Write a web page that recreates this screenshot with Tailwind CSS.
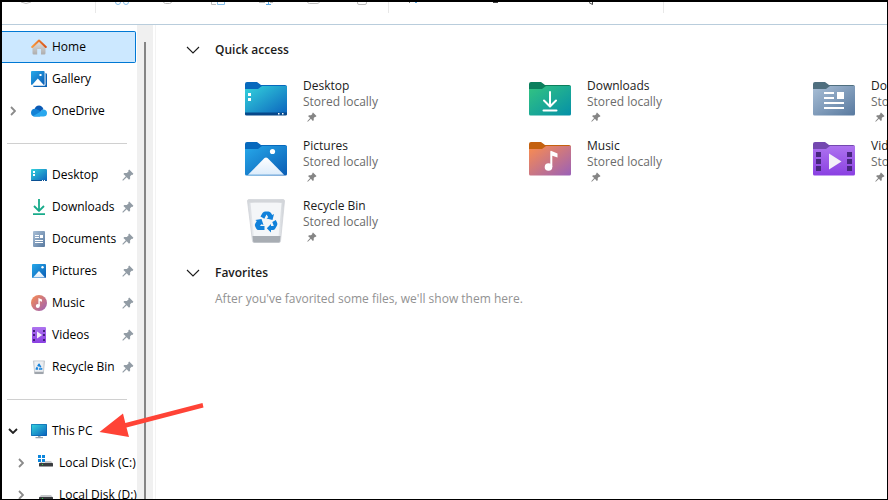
<!DOCTYPE html>
<html lang="en">
<head>
  <meta charset="UTF-8" />
  <meta name="viewport" content="width=device-width, initial-scale=1.0" />
  <title>Home - File Explorer</title>
  <script src="https://cdn.jsdelivr.net/npm/@tailwindcss/browser@4"></script>
</head>
<body class="bg-white font-['Open_Sans','Noto_Sans',sans-serif] text-xs text-black">

  <!-- Icon sprite -->
  <svg class="absolute w-0 h-0" aria-hidden="true">
    <defs>
      <linearGradient id="g-teal" x1="0" y1="0" x2="1" y2="1"><stop offset="0" stop-color="#34d3dc" /><stop offset="1" stop-color="#0b62bd" /></linearGradient>
      <linearGradient id="g-blue" x1="0" y1="0" x2="1" y2="1"><stop offset="0" stop-color="#27a9ea" /><stop offset="1" stop-color="#0a5cb4" /></linearGradient>
      <linearGradient id="g-green" x1="0" y1="0" x2="1" y2="1"><stop offset="0" stop-color="#33c481" /><stop offset="1" stop-color="#0590a8" /></linearGradient>
      <linearGradient id="g-music" x1="0" y1="0" x2="1" y2="1"><stop offset="0" stop-color="#fb8d4e" /><stop offset="1" stop-color="#9a60b8" /></linearGradient>
      <linearGradient id="g-doc" x1="0" y1="0" x2="1" y2="1"><stop offset="0" stop-color="#a9bfd6" /><stop offset="1" stop-color="#58799f" /></linearGradient>
      <linearGradient id="g-video" x1="0" y1="0" x2="0" y2="1"><stop offset="0" stop-color="#ad73ef" /><stop offset="1" stop-color="#8a40e2" /></linearGradient>
      <linearGradient id="g-white" x1="0" y1="0" x2="0" y2="1"><stop offset="0" stop-color="#ffffff" /><stop offset="1" stop-color="#dcecfb" /></linearGradient>
      <linearGradient id="g-roof" x1="0" y1="0" x2="1" y2="0"><stop offset="0" stop-color="#f99a3e" /><stop offset="1" stop-color="#d9541a" /></linearGradient>
      <linearGradient id="g-wall" x1="0" y1="0" x2="0" y2="1"><stop offset="0" stop-color="#e2e2e2" /><stop offset="1" stop-color="#adadad" /></linearGradient>
      <linearGradient id="g-bin" x1="0" y1="0" x2="1" y2="0"><stop offset="0" stop-color="#d3d7dc" /><stop offset=".2" stop-color="#eef0f3" /><stop offset=".8" stop-color="#eceef1" /><stop offset="1" stop-color="#cdd1d6" /></linearGradient>
    </defs>

    <symbol id="pin" viewBox="0 0 12 12"><path fill="currentColor" d="M7.2.6 11.4 4.8 10.4 5.9 9.7 5.7 8.1 7.3 8.1 9.8 7 10.7 4.7 8.2 1 11.7.3 11 3.800 7.300 1.400 5 2.300 4 4.800 4 6.500 2.400 6.300 1.600Z" /></symbol>
    <symbol id="chev-right" viewBox="0 0 6 10"><path fill="none" stroke="currentColor" stroke-width="1.8" d="M1 1 5 5 1 9" /></symbol>
    <symbol id="chev-down" viewBox="0 0 14 8"><path fill="none" stroke="currentColor" stroke-width="1.1" d="M1 1 7 7 13 1" /></symbol>

    <!-- 16px icons -->
    <symbol id="home" viewBox="0 0 16 16">
      <path fill="url(#g-wall)" d="M8 2 14.5 8V14.2Q14.5 15.5 13.3 15.5H10V10H6.2V15.5H2.7Q1.5 15.5 1.5 14.2V8Z" />
      <path fill="none" stroke="url(#g-roof)" stroke-width="2" stroke-linejoin="round" stroke-linecap="round" d="M1.2 8 8 1.6 14.8 8" />
    </symbol>
    <symbol id="gallery" viewBox="0 0 16 16">
      <path fill="#0c63b6" d="M14.5 2Q16 2.2 16 3.5V16H3.5Q2 16 2 14.8H13.2Q14.5 14.8 14.5 13.5Z" />
      <rect width="13.6" height="14" rx="1" fill="url(#g-blue)" />
      <path fill="#fff" d="M1 14 6.8 7.5 12.8 14Z" /><rect x="8.5" y="3" width="2" height="2" fill="#fff" />
    </symbol>
    <symbol id="onedrive" viewBox="0 0 16 12">
      <path fill="#0a5ab5" d="M3.500 4.500Q4.500 .500 8 .500 11 .500 12.400 4L8 8Z" />
      <path fill="#1382d6" d="M4 11.500Q0 11.500 0 7.800 .200 4 4 3.800 6 3.800 11 7.500L9 11.500Z" />
      <path fill="#2aa8ee" d="M2 11 10 6.400Q11 4 13 4.600 16 5.300 16 8.300 15.800 11.500 12.600 11.500H4Q2.800 11.500 2 11Z" />
    </symbol>
    <symbol id="desktop" viewBox="0 0 16 12">
      <rect width="16" height="12" rx="1" fill="url(#g-teal)" />
      <path fill="#0a4f92" d="M0 11H16V11.2Q16 12 15 12H1Q0 12 0 11Z" />
      <path fill="#fff" d="M2 2H4V4H2ZM2 5H4V7H2ZM11 11H12V12H11ZM13 11H14V12H13Z" />
    </symbol>
    <symbol id="download" viewBox="0 0 16 16"><path fill="none" stroke="#18ab8b" stroke-width="1.8" d="M8 0V11.5M3 7 8 12 13 7M2 15.2H14" /></symbol>
    <symbol id="document" viewBox="0 0 16 16">
      <rect x="2" width="12" height="16" rx="1" fill="url(#g-doc)" />
      <path fill="#fff" d="M4 4H8V5H4ZM4 6H8V7H4ZM9 4H12V7H9ZM4 9H12V10H4ZM4 11H12V12H4Z" />
    </symbol>
    <symbol id="picture" viewBox="0 0 16 16">
      <rect x="1" y="1" width="14" height="14" rx="1" fill="url(#g-blue)" />
      <path fill="url(#g-white)" d="M2 14.6 8 8 14 14.6Z" /><circle cx="11.5" cy="4.3" r="1.2" fill="#fff" />
    </symbol>
    <symbol id="music" viewBox="0 0 16 16">
      <circle cx="8" cy="8" r="8" fill="url(#g-music)" />
      <circle cx="6.8" cy="11" r="2" fill="#fff" /><path fill="#fff" d="M7.4 3 11 4.5V6.8L8.8 6V11H7.4Z" />
    </symbol>
    <symbol id="video" viewBox="0 0 16 16">
      <rect x="1" y="0" width="14" height="16" rx="1" fill="url(#g-video)" />
      <path fill="#43207d" d="M2 3H4V5H2ZM2 7H4V9H2ZM2 12H4V14H2ZM12 3H14V5H12ZM12 7H14V9H12ZM12 12H14V14H12Z" />
      <path fill="#f3f0f8" d="M6 4.500 11.200 8 6 11.500Z" />
    </symbol>
    <symbol id="bin" viewBox="0 0 16 16">
      <path fill="url(#g-bin)" stroke="#b9bec5" stroke-width=".7" d="M2.400 1.900H13.600L12.300 14.600H3.700Z" />
      <path fill="#9fa5ac" d="M3.500 12.800H12.500L12.300 15H3.700Z" />
      <path fill="none" stroke="#1683dc" stroke-width="1.700" stroke-linejoin="round" stroke-dasharray="3.600 .900" d="M8 5.300 10.600 10H5.400Z" />
    </symbol>
    <symbol id="pc" viewBox="0 0 16 16">
      <rect x="0" y="1" width="16" height="12" rx=".8" fill="#0a5fae" />
      <rect x=".6" y="1.6" width="14.8" height="10.8" fill="url(#g-teal)" />
      <path fill="#9aa4ae" d="M7 13H9.5V14H12V15.2H4.5V14H7Z" />
    </symbol>
    <symbol id="disk-win" viewBox="0 0 16 12">
      <path fill="#0c86dc" d="M1 0H4V3H1ZM5 0H8V3H5ZM1 4H4V7H1ZM5 4H8V7H5Z" />
      <path fill="#c5c7ca" d="M2 8.500 4 7H5V7.500H8V6H14L16 8.500Z" />
      <rect x="2" y="8" width="14" height="3.500" rx=".6" fill="#3b3d40" /><rect x="5" y="9" width="1" height="1" fill="#32d74b" />
    </symbol>
    <symbol id="disk" viewBox="0 0 16 12">
      <path fill="#c5c7ca" d="M2 8.500 4 6H14L16 8.500Z" />
      <rect x="2" y="8" width="14" height="3.500" rx=".6" fill="#3b3d40" /><rect x="5" y="9" width="1" height="1" fill="#32d74b" />
    </symbol>

    <!-- 44px folders -->
    <symbol id="f-desktop" viewBox="0 0 44 36">
      <path fill="#0769bd" d="M1 3Q1 1 3 1H13L17 4H41Q43 4 43 6V12H1Z" />
      <path fill="url(#g-teal)" d="M1 8H14L18 5H43V33Q43 34 42 34H2Q1 34 1 33Z" />
      <path fill="#07488a" d="M1 31.5H43V33Q43 34.5 41.5 34.5H2.5Q1 34.5 1 33Z" />
      <path fill="#fff" d="M4 12H7V15H4ZM4 17H7V20H4ZM34 32H35.5V33.5H34ZM38 32H39.5V33.5H38Z" />
    </symbol>
    <symbol id="f-download" viewBox="0 0 44 36">
      <path fill="#0b7f5d" d="M1 3Q1 1 3 1H13L17 4H41Q43 4 43 6V12H1Z" />
      <path fill="url(#g-green)" d="M1 8H14L18 5H43V33Q43 34.5 41.5 34.5H2.5Q1 34.5 1 33Z" />
      <path fill="none" stroke="#fff" stroke-width="2" stroke-linecap="round" stroke-linejoin="round" d="M22 11V25M16 19.5 22 25.5 28 19.5M15.5 29.5H28.5" />
    </symbol>
    <symbol id="f-document" viewBox="0 0 44 36">
      <path fill="#4f6f7f" d="M1 3Q1 1 3 1H13L17 4H41Q43 4 43 6V12H1Z" />
      <path fill="url(#g-doc)" d="M1 8H14L18 5H43V33Q43 34.5 41.5 34.5H2.5Q1 34.5 1 33Z" />
      <path fill="#fff" d="M12 11H22V13H12ZM12 16H22V18H12ZM25 11H32V18H25ZM12 21H32V23H12ZM12 26H32V28H12Z" />
    </symbol>
    <symbol id="f-picture" viewBox="0 0 44 36">
      <path fill="#0769bd" d="M1 3Q1 1 3 1H13L17 4H41Q43 4 43 6V12H1Z" />
      <path fill="url(#g-blue)" d="M1 8H14L18 5H43V33Q43 34.5 41.5 34.5H2.5Q1 34.5 1 33Z" />
      <path fill="url(#g-white)" d="M4 33.8 20.5 17Q22 15.8 23.5 17L40 33.8Z" /><circle cx="28.5" cy="10.5" r="2.6" fill="#fff" />
    </symbol>
    <symbol id="f-music" viewBox="0 0 44 36">
      <path fill="#c4610f" d="M1 3Q1 1 3 1H13L17 4H41Q43 4 43 6V12H1Z" />
      <path fill="url(#g-music)" d="M1 8H14L18 5H43V33Q43 34.5 41.5 34.5H2.5Q1 34.5 1 33Z" />
      <circle cx="20.5" cy="26" r="3.8" fill="#fff" /><path fill="#fff" d="M22.3 10.5Q22.5 9.5 23.5 10L29.5 12.5V16.5L24.3 14.8V26H22.3Z" />
    </symbol>
    <symbol id="f-video" viewBox="0 0 44 36">
      <path fill="#7448b0" d="M1 3Q1 1 3 1H13L17 4H41Q43 4 43 6V12H1Z" />
      <path fill="url(#g-video)" d="M1 8H14L18 5H43V33Q43 34.5 41.5 34.5H2.5Q1 34.5 1 33Z" />
      <path fill="#482680" d="M4 11H9V16H4ZM4 18H9V23H4ZM4 25H9V30H4ZM35 11H40V16H35ZM35 18H40V23H35ZM35 25H40V30H35Z" />
      <path fill="#f4f1f8" d="M17 12.5 29.5 20.5 17 28.5Z" />
    </symbol>
    <symbol id="f-bin" viewBox="0 0 44 48">
      <path fill="url(#g-bin)" stroke="#d0d3d8" stroke-width=".8" stroke-linejoin="round" d="M3.500 4Q3.500 2.500 5 2.500H39Q40.500 2.500 40.500 4L36.500 44Q36.500 45.500 35 45.500H10Q8.500 45.500 8.500 44Z" />
      <path fill="#f4f6f8" d="M6.500 6H37.500L34.500 39H10Z" />
      <path fill="#d3d6da" d="M4 3H40L39.500 5.500H4.500Z" />
      <path fill="#a8adb3" d="M8.500 39H36.500L36 44Q35.900 45.500 34.500 45.500H10.500Q9.200 45.500 9 44Z" />
      <g fill="#1181da">
        <path d="M16.500 19.500 18.500 16Q19.500 14.500 21 14.500H24.500Q26 14.500 27 16L28.200 18 30 17 28.500 23 22.500 21.500 24.300 20.300 22.500 17.500 20.300 21.700Z" />
        <path d="M28.300 25 31.800 23 33 25.500Q33.800 27 33 28.500L31.300 31.500Q30.300 33 29 33H27V35.500L22.800 31.300 27 27V29H29.800Z" />
        <path d="M17.500 22 19.500 28 17.300 27.200 16 29H20.500V33H14.500Q13 33 12.200 31.500L11.200 29.500Q10.500 28 11.300 26.500L12.800 24 11.300 23Z" />
      </g>
    </symbol>
  </svg>

  <div class="relative flex h-screen flex-col overflow-hidden border-t-2 border-r border-b border-l-2 border-black">

    <!-- Command bar, scrolled almost out of view -->
    <div role="toolbar" aria-label="Commands" class="flex h-[23px] shrink-0 items-start border-b border-[#b9cddc]">
      <button aria-label="New" class="flex w-12 justify-center"><svg class="w-4 h-1" viewBox="0 0 16 4"><path fill="none" stroke="#bcbcbc" d="M3 0Q8 3 13 0" /></svg></button>
      <div class="ml-[45px] h-[11px] w-px bg-[#e8e8e8]"></div>
      <div class="mx-0.5 flex">
        <button aria-label="Cut" class="flex w-12 justify-center"><svg class="w-4 h-1" viewBox="0 0 16 4"><path fill="none" stroke="#86c0eb" d="M1.500 0Q1.500 2.500 4 2.500T6.500 0M9.500 0Q9.500 2.500 12 2.500T14.500 0" /></svg></button>
        <button aria-label="Copy" class="flex w-12 justify-center"><svg class="w-4 h-1" viewBox="0 0 16 4"><path fill="none" stroke="#bcbcbc" d="M1.500 0Q2 1.500 3.500 1.500H7.500Q9 1.500 9.500 0" /></svg></button>
        <button aria-label="Paste" class="flex w-12 justify-center"><svg class="w-4 h-1" viewBox="0 0 16 4"><path fill="none" stroke="#bcbcbc" d="M1.500 0V2.500H6" /><path fill="none" stroke="#86c0eb" d="M7.500 0V2.500H14.500V0" /></svg></button>
        <button aria-label="Rename" class="flex w-12 justify-center"><svg class="w-4 h-1" viewBox="0 0 16 4"><path fill="none" stroke="#bcbcbc" d="M1 .500H7M12 .500H15" /><path fill="none" stroke="#5aa9e6" d="M10.500 0V2.500M8 2.500H13" /></svg></button>
        <button aria-label="Share" class="flex w-12 justify-center"><svg class="w-4 h-1" viewBox="0 0 16 4"><path fill="none" stroke="#bcbcbc" d="M1.500 0Q2 1.500 3.500 1.500H11Q13 1.500 13.500 0" /></svg></button>
        <button aria-label="Delete" class="flex w-12 justify-center"><svg class="w-4 h-1" viewBox="0 0 16 4"><path fill="none" stroke="#bcbcbc" d="M3.500 0V1Q3.500 2.500 5 2.500H11Q12.500 2.500 12.500 1V0" /></svg></button>
      </div>
      <div class="h-[11px] w-px bg-[#e8e8e8]"></div>
      <button aria-label="Sort" class="flex w-12 justify-center"><svg class="w-4 h-1" viewBox="0 0 16 4"><path fill="#777" d="M4 0H5V1H4Z" /><path fill="#5aa9e6" d="M10 0H12V1H10Z" /></svg></button>
      <button aria-label="View" class="flex w-[116px] justify-center"><svg class="w-4 h-1" viewBox="0 0 16 4"><path fill="#444" d="M6 0H11V1H6Z" /></svg></button>
      <button aria-label="Filter" class="flex w-[76px] justify-center"><svg class="w-4 h-1" viewBox="0 0 16 4"><path fill="none" stroke="#444" d="M6 .500 9.500 2.500V0" /></svg></button>
      <div class="ml-[34px] h-[11px] w-px bg-[#e8e8e8]"></div>
    </div>

    <div class="flex min-h-0 flex-1">

      <!-- Navigation pane -->
      <nav class="w-[135px] shrink-0 overflow-hidden pt-1.5 whitespace-nowrap">
        <a href="#" class="mr-px flex h-8 items-center gap-[5px] rounded-r-xs border border-l-0 border-[#0078d4] bg-[#cce8ff] pl-[29px]"><svg class="size-4"><use href="#home" /></svg>Home</a>
        <a href="#" class="flex h-8 items-center gap-[5px] pl-[29px]"><svg class="size-4"><use href="#gallery" /></svg>Gallery</a>
        <a href="#" class="flex h-8 items-center gap-[5px] pl-2"><svg class="mr-2.5 h-2.5 w-1.5 text-[#8a8a8a]"><use href="#chev-right" /></svg><svg class="h-3 w-4"><use href="#onedrive" /></svg>OneDrive</a>

        <div class="flex h-8 items-center pr-2.5 pl-[5px]"><hr class="w-full border-[#d0d0d0]" /></div>

        <a href="#" class="flex h-8 items-center gap-[5px] pl-[29px]"><svg class="h-3 w-4"><use href="#desktop" /></svg>Desktop<svg class="mr-[3px] ml-auto size-3 text-[#929ca5]"><use href="#pin" /></svg></a>
        <a href="#" class="flex h-8 items-center gap-[5px] pl-[29px]"><svg class="size-4"><use href="#download" /></svg>Downloads<svg class="mr-[3px] ml-auto size-3 text-[#929ca5]"><use href="#pin" /></svg></a>
        <a href="#" class="flex h-8 items-center gap-[5px] pl-[29px]"><svg class="size-4"><use href="#document" /></svg>Documents<svg class="mr-[3px] ml-auto size-3 text-[#929ca5]"><use href="#pin" /></svg></a>
        <a href="#" class="flex h-8 items-center gap-[5px] pl-[29px]"><svg class="size-4"><use href="#picture" /></svg>Pictures<svg class="mr-[3px] ml-auto size-3 text-[#929ca5]"><use href="#pin" /></svg></a>
        <a href="#" class="flex h-8 items-center gap-[5px] pl-[29px]"><svg class="size-4"><use href="#music" /></svg>Music<svg class="mr-[3px] ml-auto size-3 text-[#929ca5]"><use href="#pin" /></svg></a>
        <a href="#" class="flex h-8 items-center gap-[5px] pl-[29px]"><svg class="size-4"><use href="#video" /></svg>Videos<svg class="mr-[3px] ml-auto size-3 text-[#929ca5]"><use href="#pin" /></svg></a>
        <a href="#" class="flex h-8 items-center gap-[5px] pl-[29px]"><svg class="size-4"><use href="#bin" /></svg>Recycle Bin<svg class="mr-[3px] ml-auto size-3 text-[#929ca5]"><use href="#pin" /></svg></a>

        <div class="flex h-8 items-center pr-2.5 pl-[5px]"><hr class="w-full border-[#d0d0d0]" /></div>

        <a href="#" class="flex h-8 items-center gap-[5px] pl-1.5"><svg class="mr-2 h-1.5 w-2.5" viewBox="0 0 10 6"><path fill="none" stroke="#222" stroke-width="1.8" d="M1 1 5 5 9 1" /></svg><svg class="size-4"><use href="#pc" /></svg>This PC</a>
        <a href="#" class="flex h-8 items-center gap-[5px] pl-4"><svg class="mr-2 h-2.5 w-1.5 text-[#8a8a8a]"><use href="#chev-right" /></svg><svg class="mr-px mb-1 h-3 w-4"><use href="#disk-win" /></svg>Local Disk (C:)</a>
        <a href="#" class="flex h-8 items-center gap-[5px] pl-4"><svg class="mr-2 h-2.5 w-1.5 text-[#8a8a8a]"><use href="#chev-right" /></svg><svg class="mr-px h-3 w-4"><use href="#disk" /></svg>Local Disk (D:)</a>
      </nav>

      <!-- Scrollbar -->
      <div class="flex w-4 shrink-0 justify-center bg-[#f0f0f0] pt-[17px]">
        <div class="w-0.5 bg-[#858585]"></div>
      </div>

      <main class="ml-0.5 min-w-0 flex-1 overflow-hidden border-l border-[#f3f3f3] pt-[17px] pl-[30px]">
        <section>
          <button class="flex h-4 items-center gap-[15px] font-semibold text-[#1b1b1b]"><svg class="h-2 w-3.5"><use href="#chev-down" /></svg>Quick access</button>
          <ul class="mt-5 ml-[58px] grid auto-rows-[60px] grid-cols-[repeat(3,284px)] leading-4 text-[#1b1b1b]">
            <li class="flex gap-[15px]"><svg class="mt-[3px] h-9 w-11"><use href="#f-desktop" /></svg><div>Desktop<p class="text-[#6b6b6b]">Stored locally</p><svg class="mt-0.5 ml-1 size-2.5 text-[#858585]"><use href="#pin" /></svg></div></li>
            <li class="flex gap-[15px]"><svg class="mt-[3px] h-9 w-11"><use href="#f-download" /></svg><div>Downloads<p class="text-[#6b6b6b]">Stored locally</p><svg class="mt-0.5 ml-1 size-2.5 text-[#858585]"><use href="#pin" /></svg></div></li>
            <li class="flex gap-[15px]"><svg class="mt-[3px] h-9 w-11"><use href="#f-document" /></svg><div>Documents<p class="text-[#6b6b6b]">Stored locally</p><svg class="mt-0.5 ml-1 size-2.5 text-[#858585]"><use href="#pin" /></svg></div></li>
            <li class="flex gap-[15px]"><svg class="mt-[3px] h-9 w-11"><use href="#f-picture" /></svg><div>Pictures<p class="text-[#6b6b6b]">Stored locally</p><svg class="mt-0.5 ml-1 size-2.5 text-[#858585]"><use href="#pin" /></svg></div></li>
            <li class="flex gap-[15px]"><svg class="mt-[3px] h-9 w-11"><use href="#f-music" /></svg><div>Music<p class="text-[#6b6b6b]">Stored locally</p><svg class="mt-0.5 ml-1 size-2.5 text-[#858585]"><use href="#pin" /></svg></div></li>
            <li class="flex gap-[15px]"><svg class="mt-[3px] h-9 w-11"><use href="#f-video" /></svg><div>Videos<p class="text-[#6b6b6b]">Stored locally</p><svg class="mt-0.5 ml-1 size-2.5 text-[#858585]"><use href="#pin" /></svg></div></li>
            <li class="flex gap-[15px]"><svg class="-mt-px h-12 w-11"><use href="#f-bin" /></svg><div>Recycle Bin<p class="text-[#6b6b6b]">Stored locally</p><svg class="mt-0.5 ml-1 size-2.5 text-[#858585]"><use href="#pin" /></svg></div></li>
          </ul>
        </section>

        <section class="mt-[7px]">
          <button class="flex h-4 items-center gap-[15px] font-semibold text-[#1b1b1b]"><svg class="h-2 w-3.5"><use href="#chev-down" /></svg>Favorites</button>
          <p class="mt-2.5 ml-[29px] leading-4 text-[#929292]">After you've favorited some files, we'll show them here.</p>
        </section>
      </main>
    </div>

    <!-- Arrow pointing at This PC -->
    <svg class="absolute top-[400px] left-24 h-10 w-[108px]" viewBox="98 402 108 40" aria-hidden="true">
      <path fill="#ff4336" d="M99.5 432 123 413.5 125.3 423 202.5 403 203.5 407.5 126.5 427.5 129 437Z" />
    </svg>
  </div>
</body>
</html>
